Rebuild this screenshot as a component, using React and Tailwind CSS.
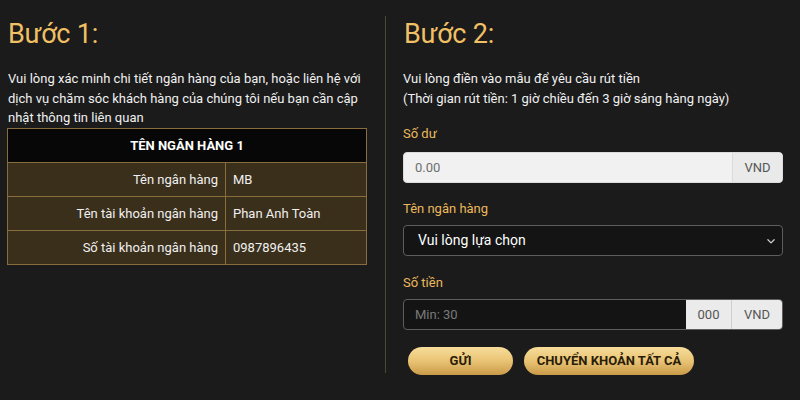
import React from 'react';

const font = { fontFamily: 'Roboto, "Noto Sans", sans-serif' };

const rows = [
  ['Tên ngân hàng', 'MB'],
  ['Tên tài khoản ngân hàng', 'Phan Anh Toàn'],
  ['Số tài khoản ngân hàng', '0987896435'],
];

const Label = ({ children, className = '' }) => (
  <div className={`text-[13px] leading-[20px] text-[#ebb95c] ${className}`}>{children}</div>
);

const GoldButton = ({ children, className = '' }) => (
  <button
    className={`h-[28px] rounded-full bg-gradient-to-b from-[#f7dd9a] via-[#e9c374] to-[#c99b48] text-[13px] font-bold text-[#2a1d08] ${className}`}
  >
    {children}
  </button>
);

const App = () => {
  return (
    <div className="w-[800px] h-[400px] bg-[#1b1b1b] text-[#f0f0f0] overflow-hidden" style={font}>
      <div className="flex mt-4 h-[357px]">
        {/* Step 1 */}
        <div className="w-[386px] pl-[7px] pr-[19px] border-r border-[#4d4535]">
          <h1 className="text-[27px] leading-[36px] text-[#f2c064] pl-[1px] tracking-[-0.2px]">Bước 1:</h1>
          <p className="mt-[17px] text-[13px] leading-[19.7px] pl-[1px]">
            Vui lòng xác minh chi tiết ngân hàng của bạn, hoặc liên hệ với dịch vụ chăm sóc khách hàng của chúng tôi nếu bạn cần cập nhật thông tin liên quan
          </p>
          <div className="w-[360px] border border-[#8a6d3c] text-[13px]">
            <div className="h-[33px] bg-[#070707] flex items-center justify-center font-bold text-white">
              TÊN NGÂN HÀNG 1
            </div>
            {rows.map(([label, value]) => (
              <div key={label} className="flex h-[34px] bg-[#3a2f1b] border-t border-[#8a6d3c]">
                <div className="w-[218px] border-r border-[#8a6d3c] flex items-center justify-end pr-[7px]">
                  {label}
                </div>
                <div className="flex-1 flex items-center pl-[7px]">{value}</div>
              </div>
            ))}
          </div>
        </div>

        {/* Step 2 */}
        <div className="flex-1 pl-[17px] pr-[17px]">
          <h1 className="text-[27px] leading-[36px] text-[#f2c064] pl-[1px] tracking-[-0.2px]">Bước 2:</h1>
          <p className="mt-[17px] text-[13px] leading-[20px]">
            Vui lòng điền vào mẫu để yêu cầu rút tiền
            <br />
            (Thời gian rút tiền: 1 giờ chiều đến 3 giờ sáng hàng ngày)
          </p>

          <Label className="mt-[15px]">Số dư</Label>
          <div className="mt-[8px] flex h-[31px] rounded-[4px] bg-[#f1f1f1] border border-[#dcdcdc] overflow-hidden text-[13px]">
            <div className="flex-1 flex items-center pl-[11px] text-[#6e6e6e]">0.00</div>
            <div className="w-[50px] flex items-center justify-center bg-[#eaeaea] border-l border-[#dadada] text-[#555]">VND</div>
          </div>

          <Label className="mt-[16px]">Tên ngân hàng</Label>
          <div className="mt-[6px] flex items-center h-[31px] rounded-[4px] border border-[#5e5e5e] bg-[#141414] pl-[14px] pr-[6px] text-[14px] text-white">
            <span className="flex-1">Vui lòng lựa chọn</span>
            <svg width="10" height="10" viewBox="0 0 16 16" fill="none" stroke="#cfcfcf" strokeWidth="2" strokeLinecap="round" strokeLinejoin="round">
              <path d="M3 6l5 5 5-5" />
            </svg>
          </div>

          <Label className="mt-[17px]">Số tiền</Label>
          <div className="mt-[6px] flex h-[31px] rounded-[4px] border border-[#5e5e5e] bg-[#141414] overflow-hidden text-[13px]">
            <div className="flex-1 flex items-center pl-[11px] text-[#7a7a7a]">Min: 30</div>
            <div className="w-[46px] flex items-center justify-center bg-[#ebebeb] text-[#555] border-r border-[#cfcfcf]">000</div>
            <div className="w-[50px] flex items-center justify-center bg-[#ebebeb] text-[#555]">VND</div>
          </div>

          <div className="mt-[17px] flex gap-[11px] pl-[5px]">
            <GoldButton className="w-[105px]">GỬI</GoldButton>
            <GoldButton className="w-[170px]">CHUYỂN KHOẢN TẤT CẢ</GoldButton>
          </div>
        </div>
      </div>
    </div>
  );
};

export default App;
